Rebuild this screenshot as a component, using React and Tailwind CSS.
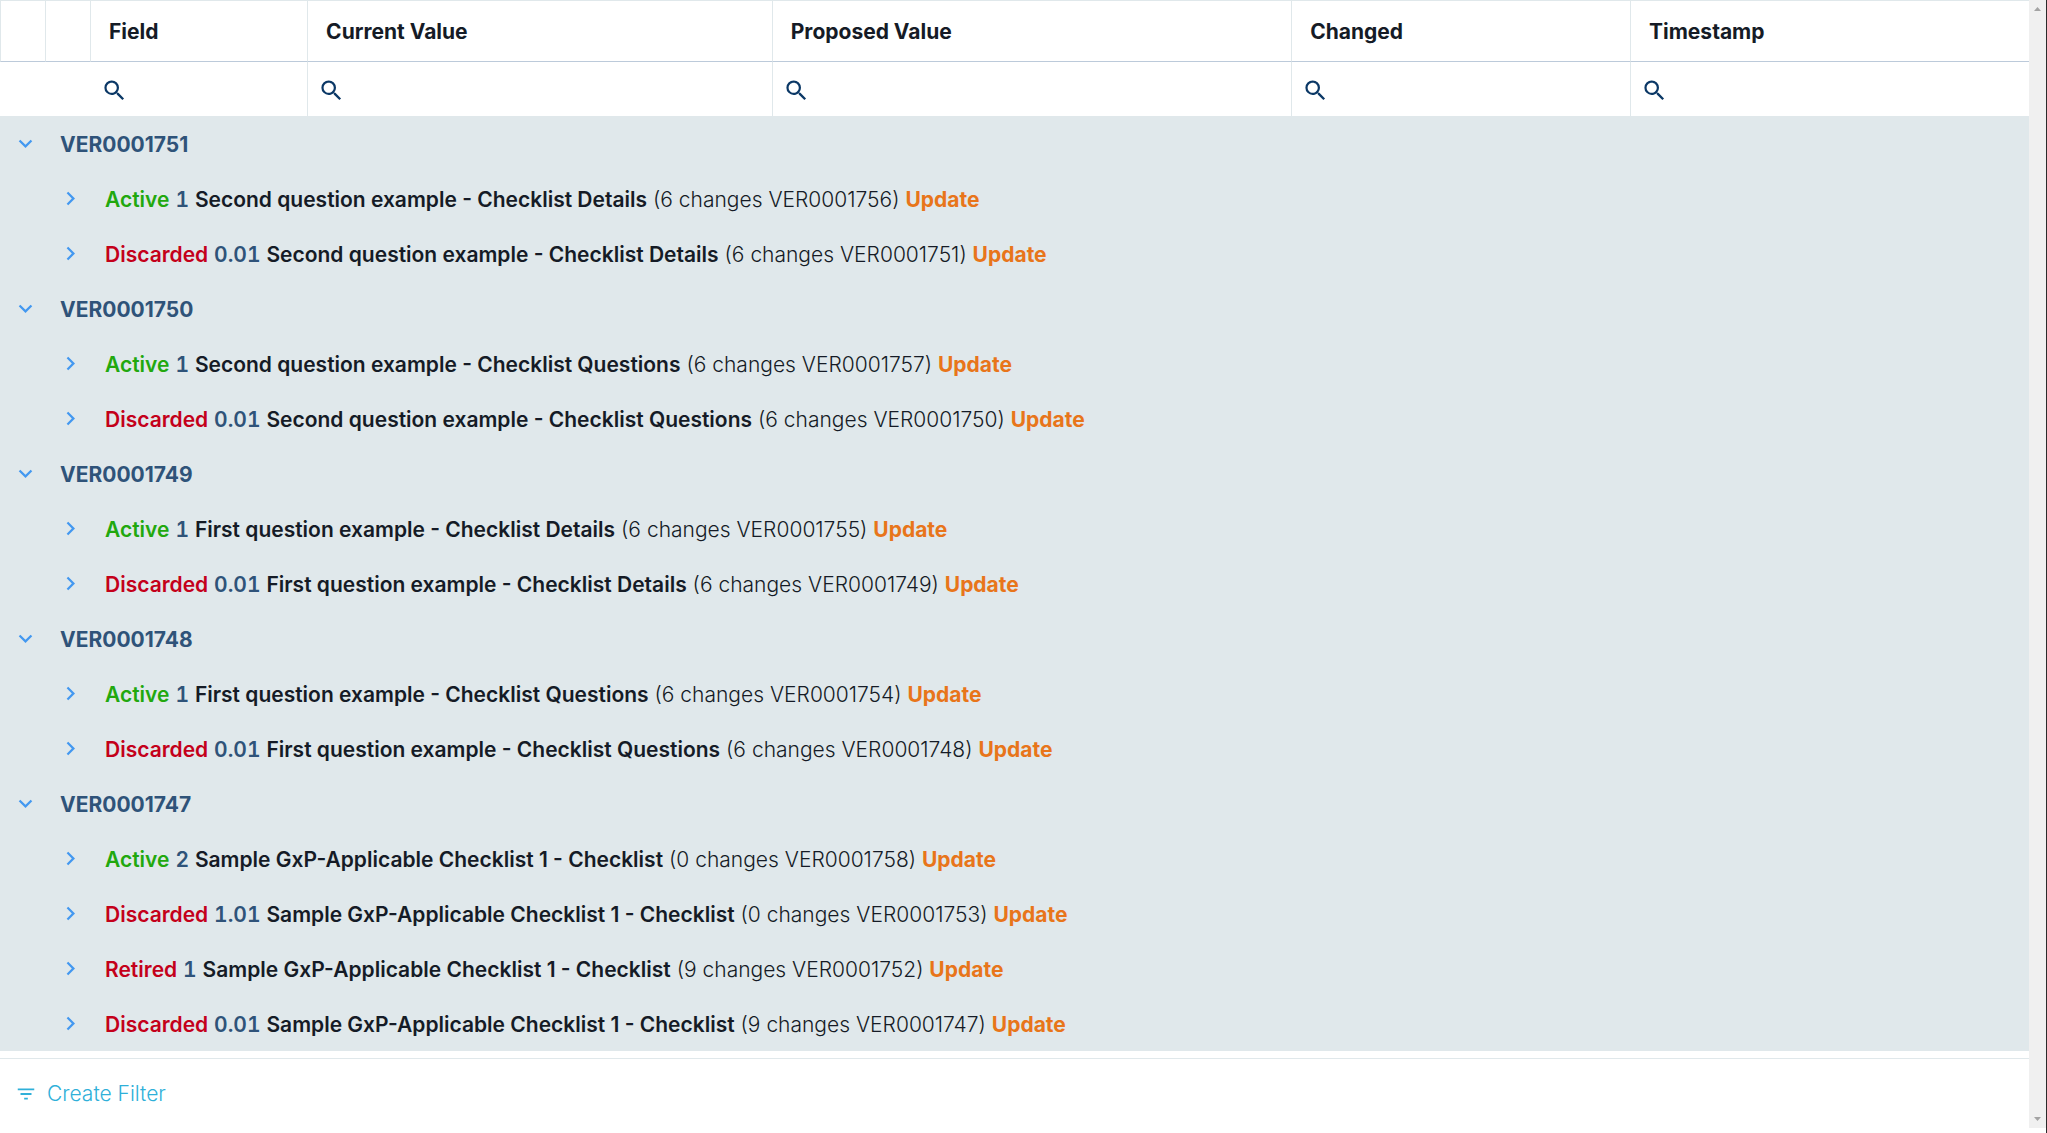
import React, { useState } from "react";
import { MdExpandMore, MdChevronRight, MdFilterList, MdSearch } from "react-icons/md";

const COLUMNS = [
  { key: "field", label: "Field", width: "w-[10.7%]" },
  { key: "current", label: "Current Value", width: "w-[22.9%]" },
  { key: "proposed", label: "Proposed Value", width: "w-[25.6%]" },
  { key: "changed", label: "Changed", width: "w-[16.7%]" },
  { key: "timestamp", label: "Timestamp", width: "" },
];

const STATUS_COLORS = {
  Active: "text-[#22a80e]",
  Discarded: "text-[#c4001a]",
  Retired: "text-[#c4001a]",
};

const GROUPS = [
  {
    id: "VER0001751",
    items: [
      { status: "Active", version: "1", title: "Second question example - Checklist Details", changes: 6, ref: "VER0001756" },
      { status: "Discarded", version: "0.01", title: "Second question example - Checklist Details", changes: 6, ref: "VER0001751" },
    ],
  },
  {
    id: "VER0001750",
    items: [
      { status: "Active", version: "1", title: "Second question example - Checklist Questions", changes: 6, ref: "VER0001757" },
      { status: "Discarded", version: "0.01", title: "Second question example - Checklist Questions", changes: 6, ref: "VER0001750" },
    ],
  },
  {
    id: "VER0001749",
    items: [
      { status: "Active", version: "1", title: "First question example - Checklist Details", changes: 6, ref: "VER0001755" },
      { status: "Discarded", version: "0.01", title: "First question example - Checklist Details", changes: 6, ref: "VER0001749" },
    ],
  },
  {
    id: "VER0001748",
    items: [
      { status: "Active", version: "1", title: "First question example - Checklist Questions", changes: 6, ref: "VER0001754" },
      { status: "Discarded", version: "0.01", title: "First question example - Checklist Questions", changes: 6, ref: "VER0001748" },
    ],
  },
  {
    id: "VER0001747",
    items: [
      { status: "Active", version: "2", title: "Sample GxP-Applicable Checklist 1 - Checklist", changes: 0, ref: "VER0001758" },
      { status: "Discarded", version: "1.01", title: "Sample GxP-Applicable Checklist 1 - Checklist", changes: 0, ref: "VER0001753" },
      { status: "Retired", version: "1", title: "Sample GxP-Applicable Checklist 1 - Checklist", changes: 9, ref: "VER0001752" },
      { status: "Discarded", version: "0.01", title: "Sample GxP-Applicable Checklist 1 - Checklist", changes: 9, ref: "VER0001747" },
    ],
  },
];

function ItemRow({ item }) {
  return (
    <tr className="h-[55px]">
      <td />
      <td className="p-0">
        <button aria-label={`Expand ${item.ref}`} className="flex w-full justify-center pl-1 text-[#4398f0]">
          <MdChevronRight size={27} />
        </button>
      </td>
      <td colSpan={5} className="pt-[2px] pl-[14px] whitespace-nowrap">
        <span className={`font-semibold ${STATUS_COLORS[item.status]}`}>{item.status}</span>{" "}
        <span className="font-semibold text-[#2f5379] tabular-nums">{item.version}</span>{" "}
        <span className="font-semibold">{item.title}</span>{" "}
        <span className="font-light">({item.changes} changes {item.ref})</span>{" "}
        <span className="font-bold text-[#e8751a]">Update</span>
      </td>
    </tr>
  );
}

function GroupRows({ group }) {
  const [open, setOpen] = useState(true);

  return (
    <>
      <tr className="h-[55px]">
        <td className="p-0">
          <button
            onClick={() => setOpen(!open)}
            aria-label={`Toggle ${group.id}`}
            className="flex w-full justify-center pl-1 text-[#4398f0]"
          >
            {open ? <MdExpandMore size={27} /> : <MdChevronRight size={27} />}
          </button>
        </td>
        <td colSpan={6} className="pt-[2px] pl-[14px] font-bold text-[#2f5379]">{group.id}</td>
      </tr>
      {open && group.items.map((item) => <ItemRow key={item.ref} item={item} />)}
    </>
  );
}

function ScrollStrip() {
  return (
    <div className="flex min-h-screen w-[18px] shrink-0 flex-col border-r border-[#2b2b2b] pb-[5px]">
      <div className="flex flex-1 flex-col items-center justify-between bg-[#f0f0f0] py-[7px] text-[#a3a3a3]">
        <svg width="7" height="4" viewBox="0 0 7 4" fill="currentColor"><path d="M3.5 0L7 4H0z" /></svg>
        <svg width="7" height="4" viewBox="0 0 7 4" fill="currentColor"><path d="M3.5 4L0 0h7z" /></svg>
      </div>
    </div>
  );
}

export default function App() {
  const [filters, setFilters] = useState({});

  return (
    <div className="flex min-h-screen bg-white font-['Inter',sans-serif] text-[21px] leading-[28px] text-[#151b26]">
      <main className="min-w-0 flex-1">
        <table className="w-full table-fixed border-separate border-spacing-0">
          <colgroup>
            <col className="w-[46px]" />
            <col className="w-[45px]" />
            {COLUMNS.map((c) => <col key={c.key} className={c.width} />)}
          </colgroup>
          <thead>
            <tr className="h-[62px]">
              <td className="border-x border-t border-b border-[#e0e8eb] border-b-[#bccada]" />
              <td className="border-t border-r border-b border-[#e0e8eb] border-b-[#bccada]" />
              {COLUMNS.map((c) => (
                <th
                  key={c.key}
                  scope="col"
                  className="border-t border-r border-b border-[#e0e8eb] border-b-[#bccada] pt-[2px] pl-[18px] text-left font-bold last:border-r-0"
                >
                  {c.label}
                </th>
              ))}
            </tr>
            <tr className="h-[54px]">
              <td />
              <td />
              {COLUMNS.map((c) => (
                <td key={c.key} className="border-r border-[#e0e8eb] pt-[2px] pl-[10px] last:border-r-0">
                  <label className="flex items-center gap-2">
                    <MdSearch size={27} className="shrink-0 text-[#0b3866]" />
                    <input
                      type="text"
                      aria-label={`Filter ${c.label}`}
                      value={filters[c.key] || ""}
                      onChange={(e) => setFilters({ ...filters, [c.key]: e.target.value })}
                      className="w-full min-w-0 bg-transparent outline-none"
                    />
                  </label>
                </td>
              ))}
            </tr>
          </thead>
          <tbody className="bg-[#e0e8eb]">
            {GROUPS.map((g) => <GroupRows key={g.id} group={g} />)}
          </tbody>
        </table>

        <div className="mt-[7px] border-t border-[#e0e8eb] px-[15px] py-[21px]">
          <button className="flex items-center gap-[10px] font-light text-[#2fb0d9]">
            <MdFilterList size={22} />
            Create Filter
          </button>
        </div>
      </main>
      <ScrollStrip />
    </div>
  );
}
